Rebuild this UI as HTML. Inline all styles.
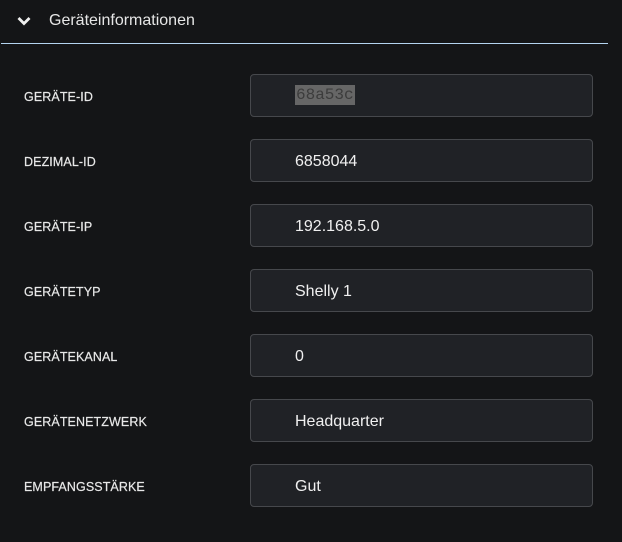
<!DOCTYPE html>
<html><head><meta charset="utf-8"><style>
body{margin:0;width:622px;height:542px;background:#141517;font-family:"Liberation Sans",sans-serif;overflow:hidden;position:relative}
.hd{position:absolute;left:0;top:0;width:622px;height:44px}
.hd svg{position:absolute;left:16px;top:15px}
.hd span{position:absolute;left:49px;top:12px;font-size:16px;color:#e6e6e6}
.line{position:absolute;left:1px;top:43px;width:607px;height:1px;background:#b4d4f0}
.lbl{position:absolute;left:24px;font-size:12.5px;color:#e8e8e8;letter-spacing:0.1px;-webkit-text-stroke:0.2px #e8e8e8}
.in{position:absolute;left:250px;width:341px;height:41px;border:1px solid #46484c;border-radius:4px;background:#202226;box-sizing:content-box}
.in span{position:absolute;left:44px;top:13px;font-size:16px;color:#f0f0f0}
.in span.sel{background:#666;color:#3c3c3c;font-family:"Liberation Mono",monospace;padding:0 1px;line-height:20px;top:10px}
</style></head><body>
<div class="hd"><svg width="16" height="12" viewBox="0 0 16 12"><path d="M2.5 3 L8 8.5 L13.5 3" stroke="#f0f0f0" stroke-width="2.8" fill="none"/></svg><span>Geräteinformationen</span></div>
<div class="line"></div>
<div class="lbl" style="top:90px">GERÄTE-ID</div><div class="in" style="top:74px"><span class="sel">68a53c</span></div>
<div class="lbl" style="top:155px">DEZIMAL-ID</div><div class="in" style="top:139px"><span>6858044</span></div>
<div class="lbl" style="top:220px">GERÄTE-IP</div><div class="in" style="top:204px"><span>192.168.5.0</span></div>
<div class="lbl" style="top:285px">GERÄTETYP</div><div class="in" style="top:269px"><span>Shelly 1</span></div>
<div class="lbl" style="top:350px">GERÄTEKANAL</div><div class="in" style="top:334px"><span>0</span></div>
<div class="lbl" style="top:415px">GERÄTENETZWERK</div><div class="in" style="top:399px"><span>Headquarter</span></div>
<div class="lbl" style="top:480px">EMPFANGSSTÄRKE</div><div class="in" style="top:464px"><span>Gut</span></div>
</body></html>
